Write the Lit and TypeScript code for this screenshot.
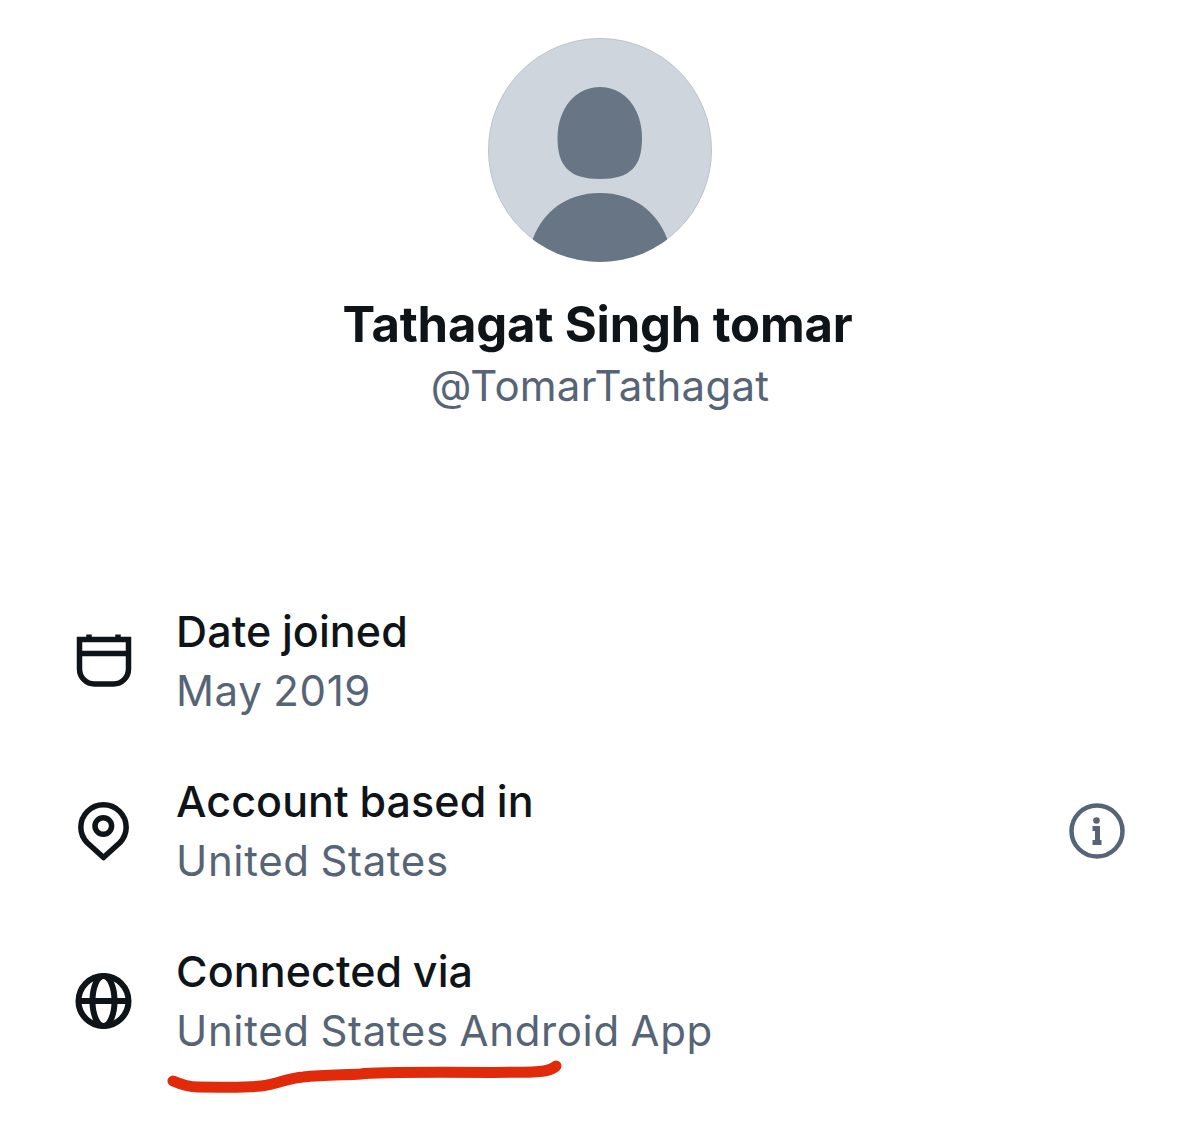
import { LitElement, html, css, svg } from "lit";
import { customElement } from "lit/decorators.js";

const calendar = svg`<svg class="ico" viewBox="0 0 56 56" fill="none" stroke="#0f1419" stroke-width="5.500">
  <path d="M3.500 6.500H52.500V36a15 15 0 0 1-15 15H18.500a15 15 0 0 1-15-15Z"/><path d="M3.500 20.500H52.500"/><path d="M13 1.500V7M42 1.500V7"/></svg>`;
const pin = svg`<svg class="ico" viewBox="0 0 56 56" fill="none" stroke="#0f1419" stroke-width="5.500">
  <path d="M27.500 54.500L11 39.500A22.700 22.700 0 0 1 4.800 24.400A22.700 22.700 0 0 1 50.200 24.400A22.700 22.700 0 0 1 44 39.500Z" stroke-linejoin="round"/><circle cx="27.300" cy="23" r="8.300"/></svg>`;
const globe = svg`<svg class="ico" viewBox="0 0 56 56" fill="none" stroke="#0f1419" stroke-width="6">
  <circle cx="27.500" cy="28" r="25"/><ellipse cx="27.500" cy="28" rx="11" ry="25"/><path d="M2.500 28H52.500"/></svg>`;
const info = svg`<svg class="info" viewBox="0 0 56 56" fill="none"><circle cx="28" cy="28" r="25.500" stroke="#566476" stroke-width="4.500"/>
  <circle cx="27.500" cy="17.500" r="3.300" fill="#566476"/><path d="M23.500 25.500H28.500V38.500M23.500 39.500H32.500" stroke="#566476" stroke-width="5"/></svg>`;

@customElement("app-root")
export class AppRoot extends LitElement {
  static styles = css`
    :host { display: block; height: 1145px; background: #fff; font-family: Inter, "Liberation Sans", sans-serif; overflow: hidden; }
    .profile { display: flex; flex-direction: column; align-items: center; padding-top: 38px; }
    .avatar { width: 224px; height: 224px; display: block; }
    .name { margin: 32px 5px 0 0; font-size: 49px; line-height: 62px; font-weight: 700; color: #0f1419; letter-spacing: -0.15px; }
    .handle { font-size: 42px; line-height: 60px; color: #566476; letter-spacing: 0.25px; }
    .rows { display: flex; flex-direction: column; gap: 50px; padding: 185px 75px 0 76px; }
    .row { display: flex; align-items: center; height: 120px; }
    .ico-wrap { width: 100px; flex: none; display: flex; }
    .ico { width: 56px; height: 56px; display: block; overflow: visible; }
    .body { flex: 1; position: relative; }
    .title { font-size: 43px; line-height: 60px; font-weight: 500; color: #0f1419; letter-spacing: 0.1px; word-spacing: -1px; }
    .sub { font-size: 42px; line-height: 60px; color: #566476; letter-spacing: 0.65px; word-spacing: -1.7px; }
    .info { width: 56px; height: 56px; display: block; flex: none; }
    .mark { position: absolute; left: -8px; top: 130px; width: 400px; height: 40px; overflow: visible; }
  `;

  render() {
    return html`
      <div class="profile">
        <svg class="avatar" viewBox="0 0 224 224">
          <defs><clipPath id="c"><circle cx="112" cy="112" r="112"/></clipPath></defs>
          <circle cx="112" cy="112" r="111.500" fill="#ced5dc" stroke="#bcc3ca" stroke-width="1"/>
          <g clip-path="url(#c)" fill="#677585">
            <path d="M112 49C136 49 154 70 154 100C154 128 143 141 112 141C81 141 69.500 128 69.500 100C69.500 70 88 49 112 49Z"/>
            <path d="M112 155C78 155 55 174 45 200.500V224H179V200.500C169 174 146 155 112 155Z"/>
          </g>
        </svg>
        <h1 class="name">Tathagat Singh tomar</h1>
        <div class="handle">@TomarTathagat</div>
      </div>
      <div class="rows">
        <div class="row"><div class="ico-wrap">${calendar}</div>
          <div class="body"><div class="title">Date joined</div><div class="sub">May 2019</div></div></div>
        <div class="row"><div class="ico-wrap">${pin}</div>
          <div class="body"><div class="title">Account based in</div><div class="sub">United States</div></div>${info}</div>
        <div class="row"><div class="ico-wrap">${globe}</div>
          <div class="body"><div class="title">Connected via</div><div class="sub">United States Android App</div>
            <svg class="mark" viewBox="0 0 400 40" fill="none"><path d="M5 10C12 13 20 16 30 16C60 16 75 17 93 15C110 13 120 7 135 6C155 4 175 4 193 3C205 1 240 1 325 1.500C345 1 365 2 376 0C382 -1 386 -3 388 -5" stroke="#e12a0a" stroke-width="11" stroke-linecap="round"/></svg>
          </div></div>
      </div>`;
  }
}
